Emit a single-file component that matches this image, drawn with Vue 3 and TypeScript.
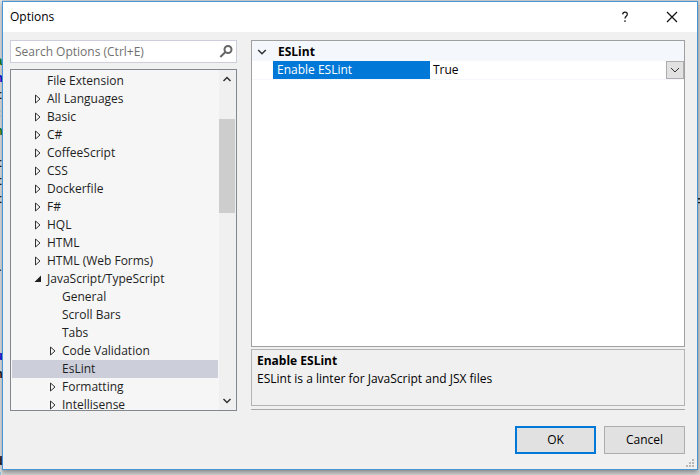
<script setup lang="ts">
import { computed, ref } from 'vue'

interface TreeRow {
  label: string
  level: 1 | 2
  state: 'leaf' | 'closed' | 'open'
}

interface CodeMark {
  text: string
  top: number
  tone: 'green' | 'blue' | 'dark'
}

const rows: TreeRow[] = [
  { label: 'File Extension', level: 1, state: 'leaf' },
  { label: 'All Languages', level: 1, state: 'closed' },
  { label: 'Basic', level: 1, state: 'closed' },
  { label: 'C#', level: 1, state: 'closed' },
  { label: 'CoffeeScript', level: 1, state: 'closed' },
  { label: 'CSS', level: 1, state: 'closed' },
  { label: 'Dockerfile', level: 1, state: 'closed' },
  { label: 'F#', level: 1, state: 'closed' },
  { label: 'HQL', level: 1, state: 'closed' },
  { label: 'HTML', level: 1, state: 'closed' },
  { label: 'HTML (Web Forms)', level: 1, state: 'closed' },
  { label: 'JavaScript/TypeScript', level: 1, state: 'open' },
  { label: 'General', level: 2, state: 'leaf' },
  { label: 'Scroll Bars', level: 2, state: 'leaf' },
  { label: 'Tabs', level: 2, state: 'leaf' },
  { label: 'Code Validation', level: 2, state: 'closed' },
  { label: 'EsLint', level: 2, state: 'leaf' },
  { label: 'Formatting', level: 2, state: 'closed' },
  { label: 'Intellisense', level: 2, state: 'closed' },
]

// Ends of the editor's code lines, seen past the dialog's left edge
const marks: CodeMark[] = [
  { text: 'a', top: 53, tone: 'green' },
  { text: 'n', top: 70, tone: 'blue' },
  { text: 't', top: 87, tone: 'dark' },
  { text: ':', top: 105, tone: 'dark' },
  { text: 'n', top: 123, tone: 'green' },
  { text: 't', top: 155, tone: 'dark' },
  { text: 't', top: 173, tone: 'dark' },
  { text: 't', top: 191, tone: 'dark' },
  { text: '-', top: 262, tone: 'dark' },
  { text: 'u', top: 348, tone: 'blue' },
  { text: 'n', top: 366, tone: 'dark' },
  { text: 'd', top: 453, tone: 'dark' },
  { text: '}', top: 468, tone: 'dark' },
]

const query = ref('')
const selected = ref('EsLint')
const enabled = ref('True')
const visibleRows = computed(() =>
  rows.filter((r) => r.label.toLowerCase().includes(query.value.toLowerCase())),
)
</script>

<template>
  <div class="desktop">
    <div class="editor" aria-hidden="true">
      <span v-for="m in marks" :key="m.top" class="mark" :class="m.tone" :style="{ top: m.top + 'px' }">{{ m.text }}</span>
      <span class="mark far">=</span>
    </div>

    <form class="dialog" role="dialog" aria-labelledby="title" @submit.prevent>
      <header class="titlebar">
        <h1 id="title">Options</h1>
        <button type="button" class="caption" aria-label="Help">
          <svg width="12" height="12" viewBox="0 0 12 12"><path d="M3.700 3.400C3.800 1.900 4.700 1.200 6 1.200c1.400 0 2.300.8 2.300 2 0 2-2.300 2-2.300 4.200M6 9.300v1.700" /></svg>
        </button>
        <button type="button" class="caption" aria-label="Close">
          <svg width="12" height="12" viewBox="0 0 12 12"><path d="M1 1l10 10M11 1L1 11" /></svg>
        </button>
      </header>

      <main class="body">
        <section class="nav">
          <div class="search">
            <input v-model="query" type="text" placeholder="Search Options (Ctrl+E)" aria-label="Search Options" />
            <button type="button" aria-label="Search">
              <svg width="14" height="13" viewBox="0 0 14 13"><circle cx="9" cy="4.500" r="3.500" /><path d="M6.200 7.200L1.300 12" /></svg>
            </button>
          </div>

          <div class="tree">
            <ul role="tree" aria-label="Option pages">
              <li v-for="row in visibleRows" :key="row.label" role="none">
                <button
                  type="button"
                  role="treeitem"
                  class="row"
                  :class="{ nested: row.level === 2, active: row.label === selected }"
                  :aria-selected="row.label === selected"
                  @click="selected = row.label"
                >
                  <span class="twisty">
                    <svg v-if="row.state === 'closed'" width="8" height="10" viewBox="0 0 8 10"><path class="closed" d="M1.500 1v8L6 5z" /></svg>
                    <svg v-else-if="row.state === 'open'" width="8" height="10" viewBox="0 0 8 10"><path class="open" d="M7 1.500V8H.500z" /></svg>
                  </span>
                  <span>{{ row.label }}</span>
                </button>
              </li>
            </ul>
            <div class="scrollbar">
              <button type="button" aria-label="Scroll up">
                <svg width="10" height="8" viewBox="0 0 10 8"><path d="M1.500 6L5 2.500 8.500 6" /></svg>
              </button>
              <div class="track"><div class="thumb"></div></div>
              <button type="button" aria-label="Scroll down">
                <svg width="10" height="8" viewBox="0 0 10 8"><path d="M1.500 2L5 5.500 8.500 2" /></svg>
              </button>
            </div>
          </div>
        </section>

        <section class="page">
          <div class="grid">
            <h2 class="category">
              <svg width="10" height="8" viewBox="0 0 10 8"><path d="M1.200 2L5 5.800 8.800 2" /></svg>
              <span>ESLint</span>
            </h2>
            <div class="property">
              <label for="enable">Enable ESLint</label>
              <div class="picker">
                <select id="enable" v-model="enabled">
                  <option>True</option>
                  <option>False</option>
                </select>
                <span class="arrow">
                  <svg width="10" height="8" viewBox="0 0 10 8"><path d="M1 2l4 4 4-4" /></svg>
                </span>
              </div>
            </div>
          </div>
          <div class="help">
            <h3>Enable ESLint</h3>
            <p>ESLint is a linter for JavaScript and JSX files</p>
          </div>
          <hr />
        </section>
      </main>

      <footer class="actions">
        <button type="submit" class="primary">OK</button>
        <button type="button">Cancel</button>
      </footer>
      <svg class="grip" width="10" height="10" viewBox="0 0 10 10"><path d="M7 0h2v2H7zM7 3h2v2H7zM7 6h2v2H7zM4 3h2v2H4zM4 6h2v2H4zM1 6h2v2H1z" /></svg>
    </form>
  </div>
</template>

<style>
body {
  margin: 0;
}
</style>

<style scoped>
* {
  box-sizing: border-box;
}

.desktop {
  position: relative;
  display: flex;
  height: 100vh;
  padding: 1px 2px 5px;
  overflow: hidden;
  background: #d4d4d4;
  color: #1e1e1e;
  font: 12px/18px "Open Sans", "Noto Sans", sans-serif;
}

.editor {
  position: absolute;
  inset: 0;
  background: linear-gradient(to right, #e4e6e8 2px, transparent 2px);
  font: bold 13px/18px "Liberation Mono", monospace;
}

.mark {
  position: absolute;
  left: -5px;
}

.mark.green {
  color: #168016;
}

.mark.blue {
  color: #1010e0;
}

.mark.dark,
.mark.far {
  color: #222;
}

.mark.far {
  top: 193px;
  right: -4px;
  left: auto;
}

.dialog {
  position: relative;
  display: flex;
  flex: 1;
  flex-direction: column;
  min-width: 0;
  border: 1px solid #4596d8;
  background: #f0f0f0;
  box-shadow: 0 2px 5px #0006;
}

button,
input,
select {
  margin: 0;
  padding: 0;
  border: 0;
  border-radius: 0;
  background: none;
  color: inherit;
  font: inherit;
}

h1,
h2,
h3,
p,
ul {
  margin: 0;
  padding: 0;
}

svg {
  display: block;
  flex: none;
  fill: none;
  stroke: #333;
  stroke-width: 1.5;
}

.titlebar {
  display: flex;
  flex: none;
  height: 30px;
  padding-right: 2px;
  background: #fff;
}

h1 {
  flex: 1;
  padding: 6px 7px;
  color: #000;
  font-size: 12px;
  font-weight: 400;
}

.caption {
  display: grid;
  place-items: center;
  width: 47px;
}

.caption svg {
  stroke: #111;
  stroke-width: 1.2;
}

.body {
  display: grid;
  flex: 1;
  grid-template-columns: 227fr 434fr;
  gap: 14px;
  min-height: 0;
  padding: 8px 12px 0 7px;
}

.nav,
.page {
  display: flex;
  flex-direction: column;
  min-width: 0;
  min-height: 0;
}

.nav {
  gap: 6px;
}

.search {
  display: flex;
  flex: none;
  height: 23px;
  border: 1px solid #cccedb;
  background: #fff;
}

.search input {
  flex: 1;
  min-width: 0;
  padding: 1px 4px 0;
  outline: 0;
}

.search input::placeholder {
  color: #717171;
  opacity: 1;
}

.search button {
  display: grid;
  place-items: center;
  width: 20px;
}

.search svg {
  stroke: #666;
  stroke-width: 2;
}

.tree {
  display: flex;
  flex: 1;
  min-height: 0;
  border: 1px solid #828790;
  background: #f6f6f6;
}

ul {
  flex: 1;
  min-width: 0;
  padding: 2px 1px 0;
  overflow: hidden;
  list-style: none;
}

.row {
  display: flex;
  align-items: center;
  gap: 5px;
  width: 100%;
  height: 18px;
  padding-left: 22px;
  text-align: left;
  white-space: nowrap;
}

.row.nested {
  padding-left: 37px;
}

.row.active {
  background: #ccceda;
}

.twisty {
  width: 8px;
}

.twisty svg {
  stroke-width: 1;
}

.twisty .open {
  fill: #1e1e1e;
  stroke: none;
}

.scrollbar {
  display: flex;
  flex: none;
  flex-direction: column;
  width: 17px;
  padding-right: 1px;
  background: #f0f0f0;
}

.scrollbar button {
  display: grid;
  place-items: center;
  height: 18px;
}

.track {
  flex: 1;
  padding-top: 31px;
}

.thumb {
  height: 94px;
  background: #cdcdcd;
}

.page {
  padding-bottom: 1px;
}

.grid {
  flex: 1;
  border: 1px solid #a0a0a0;
  background: #fff;
}

.category {
  display: flex;
  align-items: center;
  gap: 11px;
  height: 20px;
  padding: 1px 0 0 5px;
  background: #f4f7fc;
  color: #000;
  font-size: 12px;
  font-weight: 700;
}

.property {
  display: grid;
  grid-template-columns: 157fr 254fr;
  height: 19px;
  padding-left: 21px;
  border-bottom: 1px solid #f4f7fc;
}

.property label {
  padding-left: 4px;
  background: #0078d7;
  color: #fff;
}

.picker {
  display: grid;
  grid-template-columns: 1fr 18px;
}

.picker select {
  grid-area: 1 / 1 / 2 / 3;
  padding-left: 3px;
  appearance: none;
  color: #000;
}

.arrow {
  display: grid;
  grid-area: 1 / 2;
  place-items: center;
  border: 1px solid #adadad;
  background: #e1e1e1;
  pointer-events: none;
}

.arrow svg {
  stroke-width: 1;
}

.help {
  flex: none;
  height: 57px;
  margin-top: 2px;
  padding: 2px 5px;
  border: 1px solid #b4b4b4;
  color: #000;
}

h3 {
  font-size: 12px;
  font-weight: 700;
}

hr {
  width: 100%;
  margin: 3px 0 0;
  border: 0;
  border-top: 1px solid #a8a8a8;
}

.actions {
  display: flex;
  flex: none;
  justify-content: flex-end;
  gap: 8px;
  padding: 15px 12px;
}

.actions button {
  width: 81px;
  height: 28px;
  border: 1px solid #adadad;
  background: #e1e1e1;
  color: #000;
}

.actions .primary {
  border: 2px solid #0078d7;
}

.grip {
  position: absolute;
  right: 2px;
  bottom: 0;
  fill: #b8b8b8;
  stroke: none;
}
</style>
